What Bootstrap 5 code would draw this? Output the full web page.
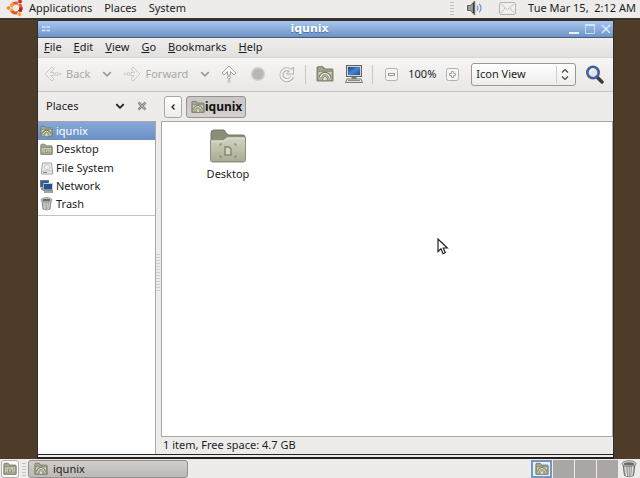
<!DOCTYPE html>
<html lang="en">
<head>
<meta charset="utf-8">
<meta name="viewport" content="width=device-width, initial-scale=1">
<title>iqunix</title>
<link href="https://cdn.jsdelivr.net/npm/bootstrap@5.3.0/dist/css/bootstrap.min.css" rel="stylesheet">
<style>
body { font: 11px/18px "Noto Sans", "DejaVu Sans", sans-serif; color: #1c1c1c; background: #4e3c28; overflow: hidden; }
button, select { font: inherit; color: inherit; border: 0; background: none; padding: 0; }
a { color: inherit; text-decoration: none; }
svg { display: block; flex: none; }
.panel { background: #edeceb; flex: none; }
.panel-top { height: 20px; border-bottom: 2px solid #3c3529; padding: 0 4px 2px 6px; }
.top-menu { gap: 12px; margin-left: 5px; }
.grip { width: 4px; height: 14px; background: radial-gradient(circle, #c4c2c0 0 1px, transparent 1px) 0 0 / 2px 3px; }
.stage { padding: 0 26px 0 37px; min-height: 0; }
.win { background: #edeceb; border: 1px solid #2b3036; border-width: 1px 1px 0; }
.titlebar { height: 17px; background: linear-gradient(#a9c6ee, #8eb0dd 45%, #6e92c6); border-bottom: 1px solid #465d7c; color: #fff; padding: 0 2px 0 4px; }
.titlebar h1 { font: bold 11px/16px "DejaVu Sans", sans-serif; text-shadow: 0 1px 1px #486b9c; }
.titlebar .win-buttons { gap: 6px; }
.menubar { height: 19px; padding-left: 6px; padding-bottom: 1px; gap: 12px; background: linear-gradient(#efeeed, #e2e1df); }
.toolbar { height: 35px; background: linear-gradient(#f6f5f4, #e9e8e6); border-top: 1px solid #d8d6d3; border-bottom: 1px solid #c9c6c2; padding: 0 4px 1px 5px; }
.tool { width: 29px; height: 28px; display: flex; align-items: center; justify-content: center; flex: none; }
.tool-text { display: flex; align-items: center; gap: 3px; color: #aaa8a5; height: 28px; }
.tool-drop { width: 18px; height: 28px; display: flex; align-items: center; justify-content: center; color: #9c9a97; margin: 0 6px 0 8px; }
.tool-drop.last { margin-right: 0; }
.divider { width: 1px; height: 19px; background: #c9c6c3; margin: 0 4px; }
.zoom-level { width: 32px; text-align: center; }
.view-pick { height: 23px; }
.view-pick select { appearance: none; width: 100%; height: 100%; border: 1px solid #9b9894; border-radius: 3px; padding-left: 4px; background: linear-gradient(#fff, #eeedeb); }
.view-pick svg { position: absolute; right: 1px; top: 2px; pointer-events: none; }
.side { width: 118px; flex: none; }
.side-head { height: 29px; padding: 0 9px 2px 8px; flex: none; }
.side-list { background: #fff; border: 1px solid #aaa7a3; border-width: 1px 1px 0 0; }
.side-list a { display: flex; align-items: center; gap: 3px; height: 18px; padding-left: 2px; }
.side-list .current { background: linear-gradient(#85a8d8, #6a90c4); color: #fff; }
.side-list ul { display: grid; grid-auto-rows: 18px; }
.side-list li:first-child, .side-list .current { height: 18px; }
.side-list li:nth-child(n+3) { padding-top: 1px; }
.side-rule { border-top: 1px solid #c5c3c1; margin-top: 3px; }
.splitter { width: 5px; flex: none; }
.splitter .dots { width: 4px; height: 40px; background: radial-gradient(circle, #d0cecb 0 1px, transparent 1px) 0 0 / 2px 3px; }
.path-row { height: 29px; gap: 4px; padding-left: 3px; flex: none; }
.path-back { width: 18px; height: 22px; border: 1px solid #aaa7a3; border-radius: 3px; background: linear-gradient(#fff, #eeedeb); }
.path-here { height: 22px; border: 1px solid #96928e; border-radius: 3px; background: linear-gradient(#c9c6c3, #d4d1ce); padding: 0 3px 0 4px; font: bold 12px/18px "Noto Sans", "DejaVu Sans", sans-serif; color: #111; }
.files { background: #fff; border: 1px solid #aaa7a3; padding: 6px 0 0 36px; }
.file { width: 60px; text-align: center; }
.status { height: 17px; line-height: 16px; padding-left: 2px; flex: none; }
.win-foot { height: 5px; border: 1px solid #25221f; border-width: 1px 1px 2px; background: #eeedec; flex: none; }
.panel-bottom { height: 19px; padding: 1px 3px 0 1px; }
.show-desk { width: 18px; height: 18px; border: 1px solid #b2afac; border-radius: 3px; background: #fafafa; }
.grip-task { margin: 0 2px 0 3px; }
.task { width: 160px; height: 18px; border: 1px solid #94908d; border-radius: 3px; background: linear-gradient(#d0cdca, #bcb8b5); padding-left: 5px; gap: 5px; }
.spaces { height: 18px; gap: 1px; margin-right: 3px; }
.spaces button { width: 21px; background: #aaa6a4; }
.spaces .now { background: #e8eff8; border: 2px solid #7596c1; }
.pointer { position: absolute; left: 437px; top: 238px; pointer-events: none; }
</style>
<script src="https://cdn.jsdelivr.net/npm/bootstrap@5.3.0/dist/js/bootstrap.bundle.min.js"></script>
</head>
<body class="d-flex flex-column vh-100">
<svg width="0" height="0" class="position-absolute" aria-hidden="true">
  <defs>
    <linearGradient id="fold" x2="0" y2="1"><stop stop-color="#d3d5c3"/><stop offset="1" stop-color="#a9ab95"/></linearGradient>
    <linearGradient id="scr" x2="1" y2="1"><stop stop-color="#173f86"/><stop offset=".5" stop-color="#4b83cf"/><stop offset="1" stop-color="#1c4f9e"/></linearGradient>
    <symbol id="folder" viewBox="0 0 16 16">
      <path d="M1 14V2.500q0-1 1-1h4L7.500 3.500H14q1 0 1 1v9.500z" fill="#a3a68f" stroke="#77796a"/>
      <path d="M1.500 5.500h13v8.500h-13z" fill="url(#fold)" stroke="#85876f"/>
    </symbol>
    <symbol id="home" viewBox="0 0 16 16">
      <use href="#folder"/><path d="M3.500 11Q5 7.500 8 7.200q3 .3 4.500 3.800" fill="none" stroke="#6f725d" stroke-width="2.600"/><path d="M3.800 11Q5.200 7.800 8 7.500q2.800.3 4.200 3.500" fill="none" stroke="#eceddd" stroke-width="1.200"/><path d="M6 11.500L8 9.800l2 1.700V14H6z" fill="#dfe1d0" stroke="#74775f" stroke-width=".7"/>
    </symbol>
    <symbol id="desk" viewBox="0 0 16 16">
      <use href="#folder"/><path d="M6.500 8h2l1 1v2.500h-3z" fill="#dfe1d1" stroke="#74775f" stroke-width=".9"/><path d="M3.500 7.800h1m-1 4h1m7-4h1m-1 4h1" stroke="#74775f"/>
    </symbol>
    <symbol id="bin" viewBox="0 0 16 18">
      <path d="M2 4l1.500 11.500q4.500 2.500 9 0L14 4z" fill="#b5b8b4" stroke="#6a6c68"/>
      <path d="M4.500 6l1 10M7 6.500l.3 10M9.300 6.500l-.3 10M11.700 6l-1 10" stroke="#e9eae7"/>
      <path d="M5.700 6.500l1 9M8.200 7v9.500M10.500 6.500l-.7 9" stroke="#7c7f7a" stroke-width=".6"/>
      <ellipse cx="8" cy="3.700" rx="7" ry="3" fill="#d0d2ce" stroke="#747771" stroke-width=".8"/><ellipse cx="8" cy="3.900" rx="5.200" ry="1.700" fill="#696c67"/>
    </symbol>
    <symbol id="down" viewBox="0 0 8 8"><path d="M1 2.500L4 5.500l3-3" fill="none" stroke="currentColor" stroke-width="1.400"/></symbol>
    <symbol id="arrow" viewBox="0 0 18 16">
      <path d="M8 1L1 8l7 7 2-2-3.500-3.500H10v-3H6.500L10 3z" fill="#f1f0ef" stroke="#cbc9c7" stroke-linejoin="round"/>
      <circle cx="12.500" cy="8" r="1.500" fill="#f1f0ef" stroke="#cbc9c7"/><circle cx="16" cy="8" r="1" fill="#f1f0ef" stroke="#d3d1cf"/>
    </symbol>
  </defs>
</svg>

<header class="panel panel-top d-flex align-items-center">
  <svg width="18" height="18" viewBox="0 0 18 18" aria-hidden="true">
    <circle cx="10" cy="9" r="5" fill="none" stroke="#df5b25" stroke-width="3.200"/>
    <path d="M6 12A5 5 0 0 1 7.500 4.700" fill="none" stroke="#f2a13b" stroke-width="3.200"/>
    <path d="M14.900 8.500A5 5 0 0 1 12.500 13.300" fill="none" stroke="#b42323" stroke-width="3.200"/>
    <path d="M12 5.500L15 1M4 9h3M12 12.500l3 4" stroke="#edeceb" stroke-width="1.200"/>
    <circle cx="2.500" cy="9" r="2.100" fill="#e8802f" stroke="#edeceb" stroke-width=".7"/><circle cx="14" cy="2.500" r="2.300" fill="#c23126" stroke="#edeceb" stroke-width=".7"/><circle cx="13.500" cy="15.300" r="2.200" fill="#efa434" stroke="#edeceb" stroke-width=".7"/>
  </svg>
  <nav class="top-menu d-flex" aria-label="Main"><button type="button">Applications</button><button type="button">Places</button><button type="button">System</button></nav>
  <span class="grip ms-auto me-2"></span>
  <button type="button" class="ms-1 me-3" aria-label="Volume"><svg width="17" height="16" viewBox="0 0 17 16"><path d="M1.500 5.500h3L8.700 1v14l-4.200-4.500h-3z" fill="#9a9c98" stroke="#5f615d"/><path d="M7.500 3v10" stroke="#353735" stroke-width="1.200"/><path d="M11 5.500q2 2.700 0 5.200M13.300 3.800q3.300 4.200 0 8.500" fill="none" stroke="#718cae" stroke-width="1.100"/></svg></button>
  <button type="button" aria-label="Mail"><svg width="17" height="13" viewBox="0 0 17 13"><rect x=".5" y=".5" width="16" height="12" rx="1.500" fill="#efefed" stroke="#b3b2af"/><path d="M2 2l6.500 5.500L15 2M2 11l4-5m9 5l-4-5" fill="none" stroke="#c4c3c0"/></svg></button>
  <button type="button" class="ms-2 ps-1 text-nowrap">Tue Mar 15,&nbsp; 2:12 AM</button>
</header>

<div class="stage d-flex flex-column flex-grow-1">
<main class="win d-flex flex-column flex-grow-1">
  <div class="titlebar d-flex align-items-center">
    <button type="button" aria-label="Window menu"><svg width="8" height="8" viewBox="0 0 8 8"><path d="M0 2h3.500M4.500 2H8M0 5.500h3.500M4.500 5.500H8" stroke="#dce9fb" stroke-width="1.600"/></svg></button>
    <h1 class="m-0 flex-grow-1 text-center">iqunix</h1>
    <div class="win-buttons d-flex">
      <button type="button" aria-label="Minimize"><svg width="10" height="10" viewBox="0 0 10 10"><path d="M0 9h10" stroke="#e6f0ff" stroke-width="2"/></svg></button>
      <button type="button" aria-label="Maximize"><svg width="10" height="10" viewBox="0 0 10 10"><path d="M.5 1v8.500h9V1" fill="none" stroke="#c8dcf7"/><path d="M0 1h10" stroke="#d7e6fb" stroke-width="2"/></svg></button>
      <button type="button" aria-label="Close"><svg width="10" height="10" viewBox="0 0 10 10"><path d="M1 1l8 8M9 1L1 9" stroke="#e0ecfd" stroke-width="1.500"/></svg></button>
    </div>
  </div>
  <nav class="menubar d-flex align-items-center" aria-label="Window">
    <button type="button"><u>F</u>ile</button><button type="button"><u>E</u>dit</button><button type="button"><u>V</u>iew</button><button type="button"><u>G</u>o</button><button type="button"><u>B</u>ookmarks</button><button type="button"><u>H</u>elp</button>
  </nav>
  <div class="toolbar d-flex align-items-center">
    <button type="button" class="tool-text"><svg width="20" height="16"><use href="#arrow"/></svg>Back</button>
    <button type="button" class="tool-drop" aria-label="Back history"><svg width="10" height="10"><use href="#down"/></svg></button>
    <button type="button" class="tool-text"><svg width="20" height="16" viewBox="0 0 20 16"><use href="#arrow" transform="matrix(-1 0 0 1 20 0)" width="20" height="16"/></svg>Forward</button>
    <button type="button" class="tool-drop last" aria-label="Forward history"><svg width="10" height="10"><use href="#down"/></svg></button>
    <button type="button" class="tool" aria-label="Up"><svg width="16" height="18" viewBox="0 0 16 18"><path d="M1 8l7-7 7 7-2 2-3.500-3.500V10h-3V6.500L3 10z" fill="#f7f7f6" stroke="#a3a19e" stroke-linejoin="round"/><circle cx="8" cy="12.500" r="1.500" fill="#f7f7f6" stroke="#a3a19e"/><circle cx="8" cy="16.200" r="1.200" fill="#f7f7f6" stroke="#b3b1ae"/></svg></button>
    <button type="button" class="tool" aria-label="Stop"><svg width="16" height="16" viewBox="0 0 16 16"><circle cx="8" cy="8" r="6.300" fill="#bab6b6" stroke="#d2cfce" stroke-width="1.500"/></svg></button>
    <button type="button" class="tool" aria-label="Reload"><svg width="17" height="17" viewBox="0 0 17 17"><path d="M12.500 4.500A5.500 5.500 0 1 0 14 11" fill="none" stroke="#b0aeac" stroke-width="4"/><path d="M15.500 1v7h-7z" fill="#f5f4f3" stroke="#b0aeac"/><path d="M12.500 4.500A5.500 5.500 0 1 0 14 10.500" fill="none" stroke="#f5f4f3" stroke-width="2"/></svg></button>
    <span class="divider"></span>
    <button type="button" class="tool" aria-label="Home"><svg width="18" height="18"><use href="#home"/></svg></button>
    <button type="button" class="tool" aria-label="Computer"><svg width="18" height="18" viewBox="0 0 18 18"><rect x="1.500" y=".5" width="15" height="11" fill="#d4d5d0" stroke="#62645f"/><rect x="3" y="2" width="12" height="8" fill="url(#scr)"/><path d="M6.500 12h5v2h-5z" fill="#777a74"/><path d="M2 14h14l1.500 3.500H.5z" fill="#e2e3df" stroke="#777a74"/><path d="M3 15.500h12" stroke="#8b8d89"/></svg></button>
    <span class="divider"></span>
    <button type="button" class="tool" aria-label="Zoom out"><svg width="13" height="13" viewBox="0 0 13 13"><rect x=".5" y=".5" width="12" height="12" rx="2" fill="#f5f4f3" stroke="#b4b2af"/><rect x="3.500" y="5.500" width="6" height="2" fill="#fff" stroke="#96948f"/></svg></button>
    <span class="zoom-level">100%</span>
    <button type="button" class="tool" aria-label="Zoom in"><svg width="13" height="13" viewBox="0 0 13 13"><rect x=".5" y=".5" width="12" height="12" rx="2" fill="#f5f4f3" stroke="#b4b2af"/><path d="M5.500 3.500h2v2h2v2h-2v2h-2v-2h-2v-2h2z" fill="#fff" stroke="#9c9a97" stroke-width=".9"/></svg></button>
    <div class="view-pick position-relative flex-grow-1 ms-1">
      <select aria-label="View"><option>Icon View</option><option>List View</option></select>
      <svg width="20" height="19" viewBox="0 0 20 19" aria-hidden="true"><path d="M1.500 1v17" stroke="#cfccc9"/><path d="M7 7.500l3-3 3 3M7 11.500l3 3 3-3" fill="none" stroke="#444" stroke-width="1.200"/></svg>
    </div>
    <button type="button" class="tool ms-1" aria-label="Search"><svg width="19" height="19" viewBox="0 0 19 19"><path d="M12 12l5 5" stroke="#3a3b3c" stroke-width="3.500" stroke-linecap="round"/><circle cx="8" cy="7.500" r="5.700" fill="#dfe3ea" stroke="#46609c" stroke-width="2.600"/><path d="M5 7.500q.5-3 3-3" fill="none" stroke="#fff" stroke-width="1.500"/></svg></button>
  </div>
  <div class="d-flex flex-grow-1">
    <aside class="side d-flex flex-column">
      <div class="side-head d-flex align-items-center">
        <button type="button" class="d-flex align-items-center flex-grow-1 justify-content-between">Places<svg width="10" height="10"><use href="#down"/></svg></button>
        <button type="button" class="ms-2 ps-1" aria-label="Close side pane"><svg width="10" height="10" viewBox="0 0 10 10"><path d="M1.500 1.500l7 7M8.500 1.500l-7 7" stroke="#8a8885" stroke-width="2.500"/><path d="M2 2l6 6M8 2L2 8" stroke="#c9c7c5" stroke-width=".7"/></svg></button>
      </div>
      <div class="side-list flex-grow-1">
        <ul class="list-unstyled m-0">
          <li><a href="#" class="current"><svg width="13" height="13"><use href="#home"/></svg>iqunix</a></li>
          <li><a href="#"><svg width="13" height="13"><use href="#desk"/></svg>Desktop</a></li>
          <li><a href="#"><svg width="13" height="13" viewBox="0 0 13 13"><path d="M2.500 1h9l1 8v3h-11V9z" fill="#eeeeec" stroke="#a2a3a0"/><path d="M1.500 9h11" stroke="#b9bab7"/><ellipse cx="7" cy="5" rx="3" ry="2.500" fill="none" stroke="#cccdca"/><path d="M3 10.500h4" stroke="#888"/></svg>File System</a></li>
          <li><a href="#"><svg width="13" height="13" viewBox="0 0 13 13"><rect x=".5" y=".5" width="8" height="6.500" fill="#315c9e" stroke="#777a74"/><path d="M1 9h4" stroke="#777a74" stroke-width="1.500"/><rect x="3.500" y="3.500" width="9" height="6.500" fill="#225197" stroke="#c9cbc7"/><path d="M3 3v7.500h10" fill="none" stroke="#555753" stroke-width=".6"/><path d="M4 12h9" stroke="#8c8e8a" stroke-width="1.600"/></svg>Network</a></li>
          <li><a href="#"><svg width="13" height="14"><use href="#bin"/></svg>Trash</a></li>
        </ul>
        <div class="side-rule"></div>
      </div>
    </aside>
    <div class="splitter d-flex align-items-center"><span class="dots"></span></div>
    <section class="d-flex flex-column flex-grow-1">
      <div class="path-row d-flex align-items-center">
        <button type="button" class="path-back d-flex align-items-center justify-content-center" aria-label="Scroll path"><svg width="6" height="8" viewBox="0 0 6 8"><path d="M4.500 1.500L2 4l2.500 2.500" fill="none" stroke="#222" stroke-width="1.300"/></svg></button>
        <button type="button" class="path-here d-flex align-items-center"><svg width="14" height="14"><use href="#home"/></svg>iqunix</button>
      </div>
      <div class="files flex-grow-1">
        <a href="#" class="file d-flex flex-column align-items-center">
          <svg width="38" height="37" viewBox="0 0 38 37" aria-hidden="true">
            <path d="M2 32V5q0-3 3-3h10l4 5h15q2 0 2 2v23z" fill="#8b8d76" stroke="#77796a"/>
            <path d="M1.500 13q0-1 1-1H14l4-3h17.500q1 0 1 1v22.500q0 1-1 1h-33q-1 0-1-1z" fill="url(#fold)" stroke="#8c8e78"/>
            <path d="M2.500 13H14.500l4-3h17" fill="none" stroke="#e3e4d5"/>
            <path d="M16 19h4l2 2v6h-6z" fill="#d4d6c3" stroke="#85876f" stroke-width="1.400"/>
            <path d="M11 18v-2h2M25 16h2v2M11 27v2h2M25 29h2v-2" fill="none" stroke="#85876f"/>
            <path d="M3 34.500h32" stroke="#9a9b8e" opacity=".5"/>
          </svg>
          Desktop
        </a>
      </div>
      <div class="status">1 item, Free space: 4.7 GB</div>
    </section>
  </div>
</main>
<div class="win-foot"></div>
</div>

<footer class="panel panel-bottom d-flex align-items-center">
  <button type="button" class="show-desk d-flex align-items-center justify-content-center" aria-label="Show desktop"><svg width="14" height="14"><use href="#desk"/></svg></button>
  <span class="grip grip-task"></span>
  <button type="button" class="task d-flex align-items-center"><svg width="14" height="14"><use href="#home"/></svg>iqunix</button>
  <div class="spaces d-flex ms-auto">
    <button type="button" class="now d-flex align-items-center justify-content-center" aria-label="Workspace 1"><svg width="14" height="14"><use href="#home"/></svg></button><button type="button" aria-label="Workspace 2"></button><button type="button" aria-label="Workspace 3"></button><button type="button" aria-label="Workspace 4"></button>
  </div>
  <button type="button" aria-label="Trash"><svg width="16" height="18"><use href="#bin"/></svg></button>
</footer>
<svg class="pointer" width="12" height="18" viewBox="0 0 12 18" aria-hidden="true"><path d="M1 1v12.500l3-2.800 2 5 2.300-1-2-4.700h4z" fill="#fff" stroke="#222" stroke-width="1.200"/></svg>
</body>
</html>
